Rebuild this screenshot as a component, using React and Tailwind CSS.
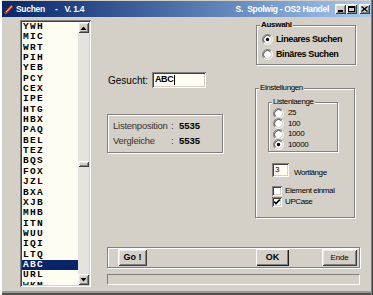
import React from "react";

const LIST = ["YWH","MIC","WRT","PIH","YEB","PCY","CEX","IPE","HTG","HBX","PAQ","BEL","TEZ","BQS","FOX","JZL","BXA","XJB","MHB","ITN","WUU","IQI","LTQ","ABC","URL","WKM"];

const SUNKEN = "shadow-[inset_1px_1px_0_#808080,inset_-1px_-1px_0_#ffffff,inset_2px_2px_0_#404040,inset_-2px_-2px_0_#d4d0c8]";
const RAISED = "shadow-[inset_1px_1px_0_#ffffff,inset_-1px_-1px_0_#404040,inset_2px_2px_0_#e8e6e2,inset_-2px_-2px_0_#808080]";
const ETCHED = "border border-[#808080] shadow-[inset_1px_1px_0_#ffffff,1px_1px_0_#ffffff]";

function Radio({ checked }) {
  return (
    <svg width="11" height="11" viewBox="0 0 12 12" className="shrink-0">
      <circle cx="6" cy="6" r="4.5" fill="#ffffff" />
      <path d="M2.11 9.89 A5.5 5.5 0 0 1 9.89 2.11" stroke="#808080" fill="none" />
      <path d="M9.89 2.11 A5.5 5.5 0 0 1 2.11 9.89" stroke="#ffffff" fill="none" />
      <path d="M2.82 9.18 A4.5 4.5 0 0 1 9.18 2.82" stroke="#404040" fill="none" />
      <path d="M9.18 2.82 A4.5 4.5 0 0 1 2.82 9.18" stroke="#d4d0c8" fill="none" />
      {checked && <circle cx="6" cy="6" r="1.8" fill="#000000" />}
    </svg>
  );
}

function Check({ checked }) {
  return (
    <div className={`w-[10px] h-[10px] bg-white shrink-0 flex items-center justify-center ${SUNKEN}`}>
      {checked && (
        <svg width="8" height="8" viewBox="0 0 8 8">
          <path d="M1.2 3.6 L3 5.6 L6.8 1.6" stroke="#000" strokeWidth="1.6" fill="none" />
        </svg>
      )}
    </div>
  );
}

function Arrow({ down }) {
  return (
    <svg width="7" height="4" viewBox="0 0 7 4">
      {down ? <path d="M0.5 0 H6.5 L3.5 3.5 Z" fill="#000" /> : <path d="M0.5 4 H6.5 L3.5 0.5 Z" fill="#000" />}
    </svg>
  );
}

function TitleBtn({ children, className = "" }) {
  return (
    <div className={`w-[11px] h-[10px] bg-[#d4d0c8] flex items-center justify-center ${RAISED} ${className}`}>
      {children}
    </div>
  );
}

export default function App() {
  return (
    <div className="w-[373px] h-[295px] bg-[#d4d0c8] flex flex-col overflow-hidden font-['Liberation_Sans',Arial,sans-serif] text-black shadow-[inset_2px_0_0_#ffffff,inset_-1px_0_0_#404040,inset_-2px_0_0_#808080,inset_0_-2px_0_#505050,inset_0_-4px_0_#9a9a9a]">
      {/* Title bar */}
      <div className="mx-[2px] mt-[1px] h-[16px] flex items-center bg-linear-to-r from-[#0a246a] to-[#a6caf0] text-white font-bold text-[8.5px] tracking-[-0.3px] shrink-0">
        <svg width="11" height="11" viewBox="0 0 11 11" className="ml-[1px]">
          <path d="M2 9.5 L9.5 1.5" stroke="#ff5a00" strokeWidth="2.4" />
          <path d="M3 8 L9 2" stroke="#ffd080" strokeWidth="0.8" />
          <path d="M1 10.5 L3.5 8.5 L2.5 7.5 Z" fill="#2040c0" />
          <path d="M8.5 0.5 L10.5 2.5" stroke="#1030a0" strokeWidth="1.2" />
        </svg>
        <span className="ml-[2px]">Suchen</span>
        <span className="ml-[10px]">-</span>
        <span className="ml-[7px]">V. 1.4</span>
        <div className="flex-1" />
        <span className="whitespace-pre">S.  Spolwig - OS2 Handel</span>
        <div className="ml-[6px] flex items-center">
          <TitleBtn>
            <div className="w-[5px] h-[2px] bg-black mt-[4px]" />
          </TitleBtn>
          <TitleBtn>
            <div className="w-[7px] h-[6px] border border-black border-t-2" />
          </TitleBtn>
          <TitleBtn className="ml-[2px]">
            <svg width="7" height="6" viewBox="0 0 7 6">
              <path d="M0.5 0.5 L6.5 5.5 M6.5 0.5 L0.5 5.5" stroke="#000" strokeWidth="1.4" />
            </svg>
          </TitleBtn>
        </div>
        <div className="w-[1px]" />
      </div>

      {/* Body */}
      <div className="flex flex-1">
        {/* Left: listbox */}
        <div className="w-[92px] pl-[20px] pt-[3px] shrink-0">
          <div className={`w-[71px] h-[267px] bg-[#fffcf2] p-[2px] flex ${SUNKEN}`}>
            <div className="flex-1 overflow-hidden font-['Liberation_Mono',monospace] font-bold text-[9.5px] tracking-[1.3px]">
              {LIST.map((s) => (
                <div
                  key={s}
                  className={`h-[10.35px] leading-[10.35px] pl-[1px] ${s === "ABC" ? "bg-[#0a246a] text-white" : ""}`}
                >
                  {s}
                </div>
              ))}
            </div>
            <div className="w-[11px] bg-[#e6e3de] flex flex-col">
              <div className={`h-[11px] bg-[#d4d0c8] flex items-center justify-center ${RAISED}`}>
                <Arrow />
              </div>
              <div className="h-[128px]" />
              <div className={`h-[6px] bg-[#d4d0c8] ${RAISED}`} />
              <div className="flex-1" />
              <div className={`h-[11px] bg-[#d4d0c8] flex items-center justify-center ${RAISED}`}>
                <Arrow down />
              </div>
            </div>
          </div>
        </div>

        {/* Right area */}
        <div className="flex-1 flex flex-col pl-[15px] pr-[13px]">
          <div className="flex h-[230px] shrink-0">
            {/* Middle column */}
            <div className="w-[148px] flex flex-col">
              <div className="mt-[55px] flex items-center h-[16px]">
                <span className="ml-[1px] w-[44px] text-[10px]">Gesucht:</span>
                <div className={`w-[54px] h-[16px] bg-[#fffcf2] flex items-center pl-[3px] ${SUNKEN}`}>
                  <span className="font-bold text-[9px] tracking-[-0.4px]">ABC</span>
                  <div className="w-[1px] h-[10px] bg-black ml-[1px]" />
                </div>
              </div>
              <div className={`mt-[26px] w-[116px] h-[39px] pt-[5px] pl-[5px] flex flex-col gap-[2px] ${ETCHED}`}>
                <div className="flex h-[13px] items-center">
                  <span className="w-[58px] text-[9.5px] tracking-[-0.25px] text-[#333] whitespace-nowrap">Listenposition</span>
                  <span className="w-[8px] text-[9.5px] text-[#333]">:</span>
                  <span className="font-bold text-[9.5px]">5535</span>
                </div>
                <div className="flex h-[13px] items-center">
                  <span className="w-[58px] text-[9.5px] tracking-[-0.25px] text-[#333]">Vergleiche</span>
                  <span className="w-[8px] text-[9.5px] text-[#333]">:</span>
                  <span className="font-bold text-[9.5px]">5535</span>
                </div>
              </div>
            </div>

            {/* Right column */}
            <div className="w-[102px] flex flex-col">
              <div className={`relative mt-[8px] ml-[1px] w-[100px] h-[40px] pl-[5px] pt-[8px] flex flex-col gap-[4px] ${ETCHED}`}>
                <span className="absolute top-[-6px] left-[3px] px-[1px] bg-[#d4d0c8] font-bold text-[8px] tracking-[-0.3px] leading-[10px]">Auswahl</span>
                <div className="flex items-center gap-[3px] h-[11px]">
                  <Radio checked />
                  <span className="font-bold text-[9px] tracking-[-0.4px]">Lineares Suchen</span>
                </div>
                <div className="flex items-center gap-[3px] h-[11px]">
                  <Radio />
                  <span className="font-bold text-[9px] tracking-[-0.4px]">Binäres Suchen</span>
                </div>
              </div>

              <div className={`relative mt-[23px] w-[100px] h-[130px] pl-[12px] pt-[13px] text-[8px] tracking-[-0.4px] ${ETCHED}`}>
                <span className="absolute top-[-6px] left-[3px] px-[1px] bg-[#d4d0c8] leading-[10px]">Einstellungen</span>
                <div className={`relative w-[70px] h-[50px] pl-[4px] pt-[5px] flex flex-col ${ETCHED}`}>
                  <span className="absolute top-[-6px] left-[3px] px-[1px] bg-[#d4d0c8] leading-[10px]">Listenlaenge</span>
                  {["25", "100", "1000", "10000"].map((v) => (
                    <div key={v} className="flex items-center gap-[4px] h-[10.5px]">
                      <Radio checked={v === "10000"} />
                      <span>{v}</span>
                    </div>
                  ))}
                </div>
                <div className="mt-[11px] ml-[4px] flex items-end">
                  <div className={`w-[17px] h-[14px] bg-[#fffcf2] pl-[3px] pt-[1px] leading-[11px] ${SUNKEN}`}>3</div>
                  <span className="ml-[5px] leading-[9px]">Wortlänge</span>
                </div>
                <div className="mt-[9px] ml-[4px] flex items-center gap-[3px] h-[10px]">
                  <Check />
                  <span>Element einmal</span>
                </div>
                <div className="mt-[1px] ml-[4px] flex items-center gap-[3px] h-[10px]">
                  <Check checked />
                  <span>UPCase</span>
                </div>
              </div>
            </div>
          </div>

          {/* Button panel */}
          <div className={`h-[21px] flex items-center pl-[10px] ${ETCHED}`}>
            <div className={`w-[29px] h-[17px] flex items-center justify-center font-bold text-[9px] ${RAISED}`}>Go !</div>
            <div className="ml-[109px] w-[33px] h-[17px] flex items-center justify-center font-bold text-[9px] shadow-[inset_1px_1px_0_#ffffff,inset_-1px_-1px_0_#202020,inset_-2px_-2px_0_#808080]">OK</div>
            <div className={`ml-[33px] w-[35px] h-[17px] flex items-center justify-center text-[8px] tracking-[-0.2px] ${RAISED}`}>Ende</div>
          </div>

          {/* Status bar */}
          <div className="mt-[6px] h-[11px] border border-t-[#808080] border-l-[#808080] border-b-white border-r-white" />
        </div>
      </div>
    </div>
  );
}
